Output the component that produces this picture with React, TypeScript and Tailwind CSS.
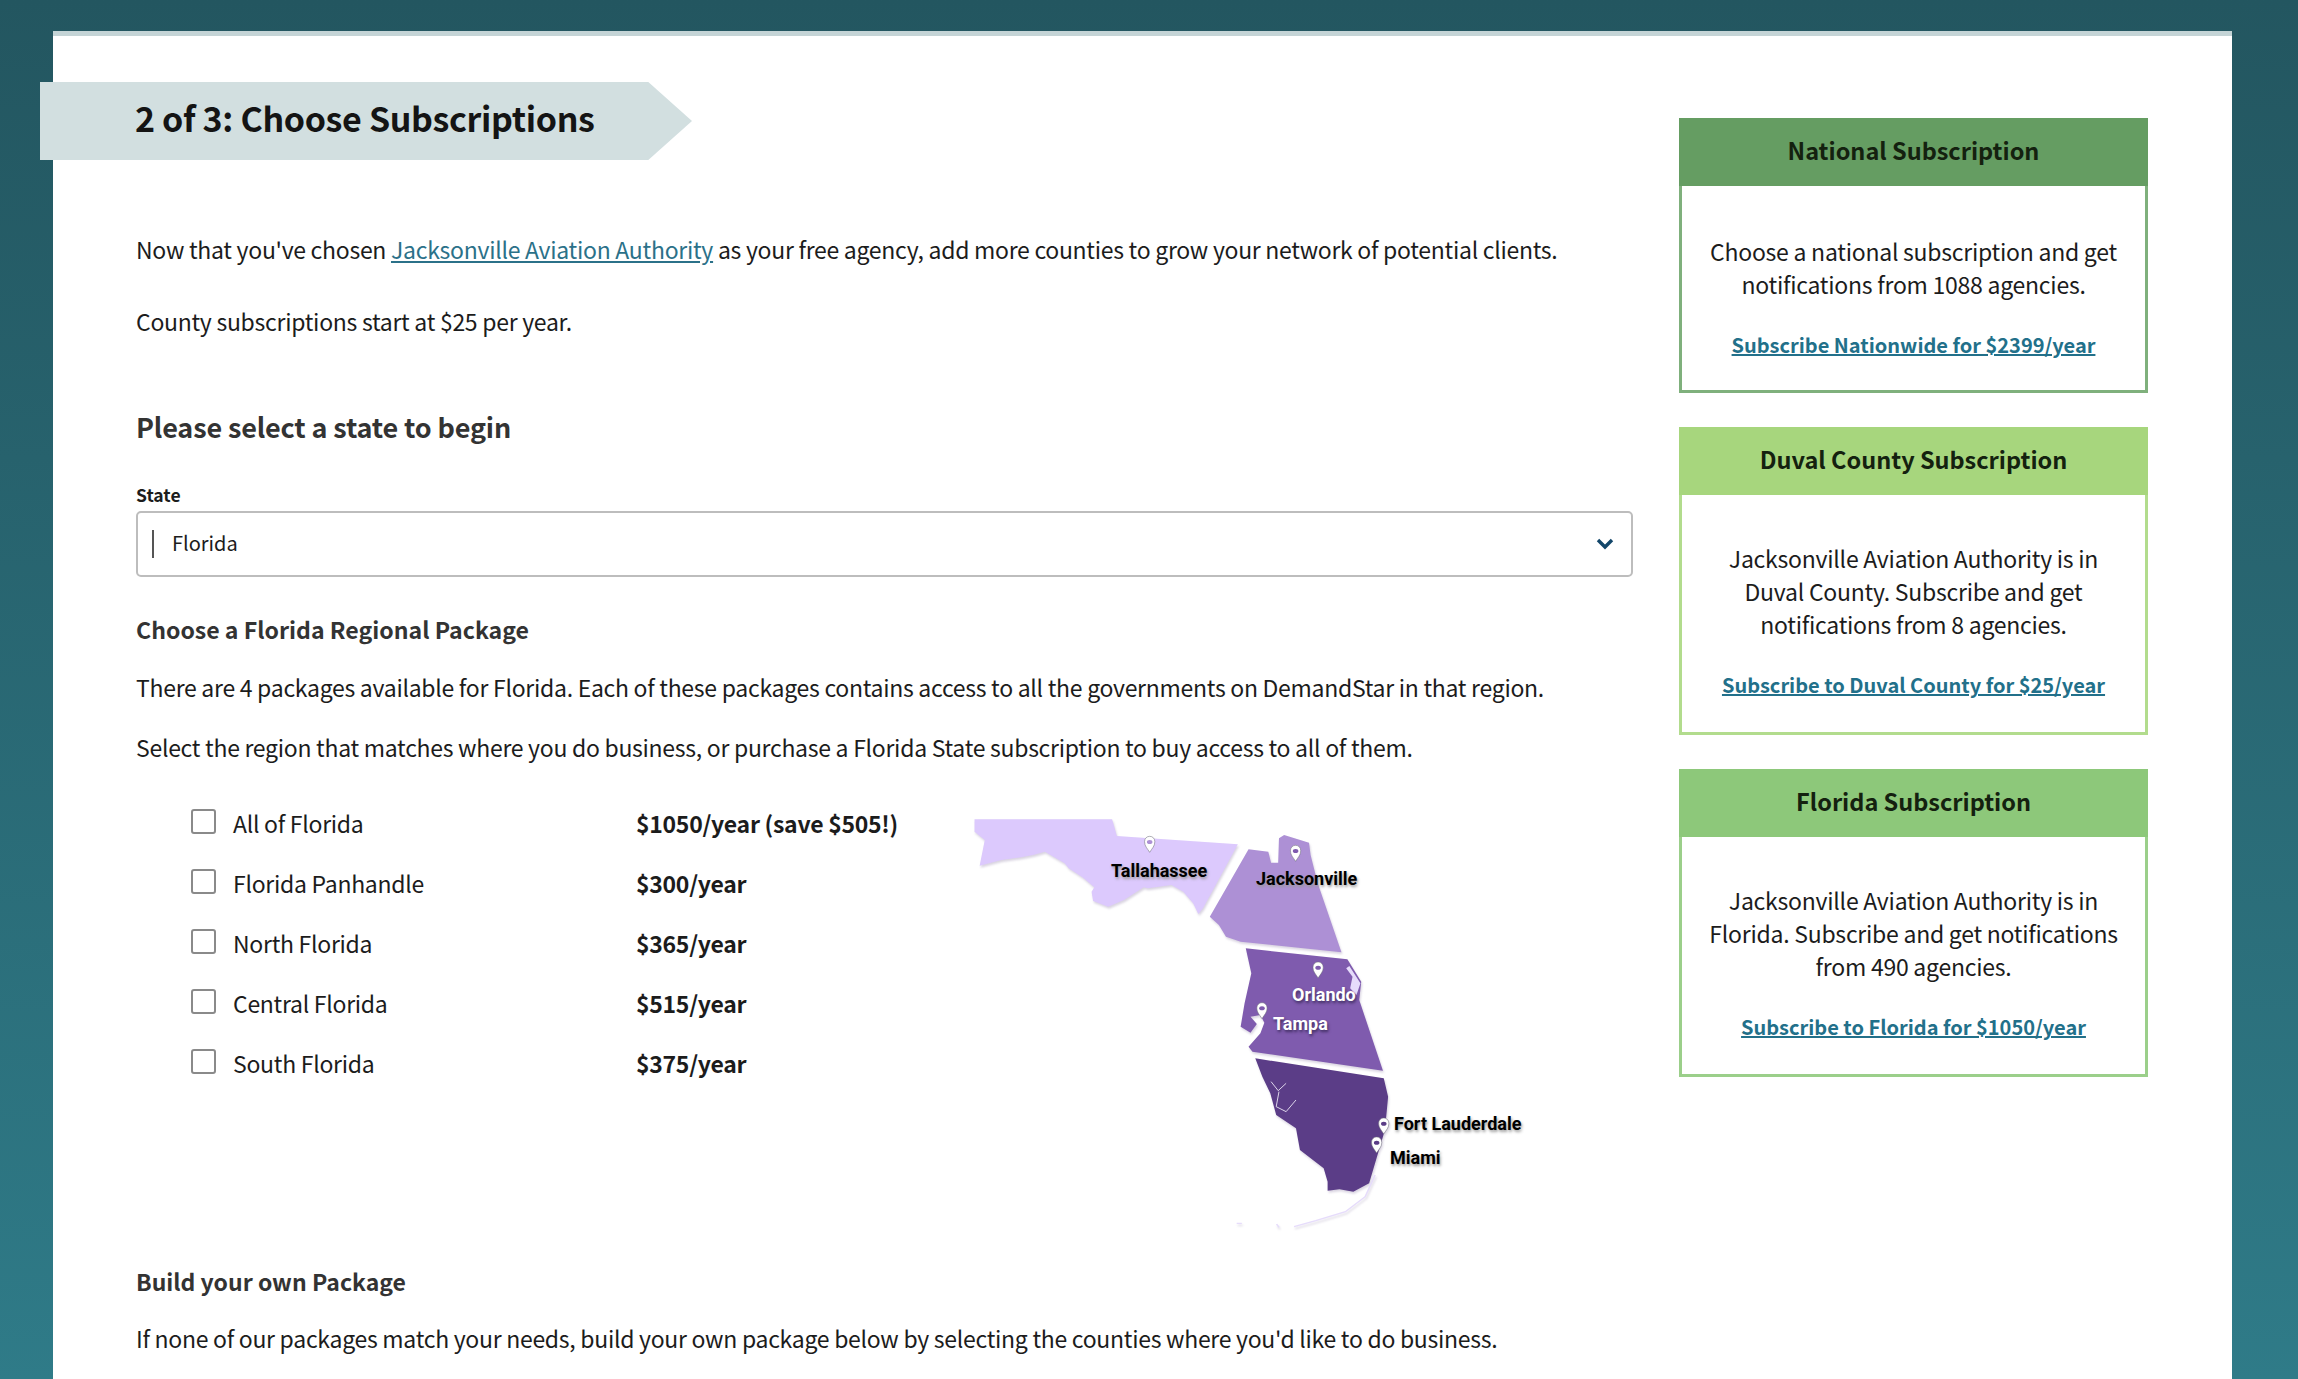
import React from "react";

const F = "font-['Noto_Sans_CJK_SC','Source_Sans_Pro','Liberation_Sans',sans-serif]";

function Pin({ x, y, fill }: { x: number; y: number; fill: string }) {
  return (
    <g transform={`translate(${x} ${y})`}>
      <path d="M0 24 C-6 12 -13 6 -13 -8 C-13 -18 -7 -24 0 -24 C7 -24 13 -18 13 -8 C13 6 6 12 0 24 Z" fill="#fff" stroke="#6d6d7a" strokeWidth="1.5" />
      <ellipse cx="0" cy="-7" rx="7" ry="6" fill={fill} />
    </g>
  );
}

function MapLabel({ className, children }: { className: string; children: React.ReactNode }) {
  return (
    <span className={`absolute font-['Roboto',sans-serif] font-bold text-[18px] leading-[22px] whitespace-nowrap ${className}`}>
      {children}
    </span>
  );
}

function FloridaMap() {
  return (
    <div className="relative w-[620px] h-[450px] shrink-0">
      <svg viewBox="0 0 1568 1350" preserveAspectRatio="none" className="w-[620px] h-[450px] block [filter:drop-shadow(1px_2px_1px_rgba(80,60,120,0.22))]">
        <path fill="#dcc9fd" d="M62 58 L410 58 L422 108 L728 133 L640 325 L628 342 L615 310 L590 275 L560 255 L500 265 L490 262 L440 300 L400 320 L362 303 L358 275 L365 262 L335 232 L300 205 L290 190 L240 155 L210 165 L180 172 L130 180 L75 197 L88 120 L62 95 Z" />
        <path fill="#ad90d5" d="M657 350 L755 148 L805 155 L812 188 L830 188 L832 115 L845 105 L908 128 L912 165 L930 250 L990 457 L735 425 L698 410 L680 375 Z" />
        <path fill="#7f5bae" d="M748 445 L1005 478 L1040 545 L1035 600 L1095 812 L765 755 L755 740 L785 700 L795 668 L785 645 L760 650 L776 672 L760 698 L735 680 L745 610 L762 520 Z" />
        <path fill="#e6dcfb" d="M1002 505 L1018 530 L1012 565 L1028 585 L1038 550 L1010 498 Z" />
        <path fill="#5b3d87" d="M772 775 L1097 835 L1108 890 L1100 990 L1075 1090 L1060 1150 L1020 1175 L985 1168 L955 1172 L955 1145 L945 1105 L885 1050 L875 985 L825 945 L810 880 L790 830 Z" />
        <path fill="none" stroke="#e9e3f3" strokeWidth="2.5" d="M812 845 L830 872 L850 850 M832 875 L825 920 L850 935 L875 900" />
        <path fill="none" stroke="#e6dcfb" strokeWidth="4" d="M1075 1125 L1050 1190 L1000 1235 L925 1262 L870 1280 M725 1270 L738 1270 M826 1272 L832 1282" />
        <Pin x={505} y={133} fill="#ad90d5" />
        <Pin x={874} y={160} fill="#7f5bae" />
        <Pin x={931} y={510} fill="#7f5bae" />
        <Pin x={789} y={632} fill="#7f5bae" />
        <Pin x={1097} y={978} fill="#5b3d87" />
        <Pin x={1079} y={1035} fill="#5b3d87" />
      </svg>
      <MapLabel className="left-[161px] top-[60px] text-black [text-shadow:1px_2px_3px_#999]">Tallahassee</MapLabel>
      <MapLabel className="left-[306px] top-[68px] text-black [text-shadow:1px_2px_3px_#999]">Jacksonville</MapLabel>
      <MapLabel className="left-[342px] top-[184px] text-white [text-shadow:1px_2px_3px_#3b2a5c]">Orlando</MapLabel>
      <MapLabel className="left-[323px] top-[213px] text-white [text-shadow:1px_2px_3px_#3b2a5c]">Tampa</MapLabel>
      <MapLabel className="left-[444px] top-[313px] text-black [text-shadow:1px_2px_3px_#999]">Fort Lauderdale</MapLabel>
      <MapLabel className="left-[440px] top-[347px] text-black [text-shadow:1px_2px_3px_#999]">Miami</MapLabel>
    </div>
  );
}

const pkgs = [
  ["All of Florida", "$1050/year (save $505!)"],
  ["Florida Panhandle", "$300/year"],
  ["North Florida", "$365/year"],
  ["Central Florida", "$515/year"],
  ["South Florida", "$375/year"],
];

function Card({ title, head, border, lines, link, topPad, pb }: { title: string; head: string; border: string; lines: string; link: string; topPad: string; pb: string }) {
  return (
    <div className={`border-[3px] ${border}`}>
      <div className={`${head} -mx-[3px] -mt-[3px] h-[68px] pb-[3px] flex items-center justify-center text-[23.5px] font-semibold text-[#14210f]`}>{title}</div>
      <div className={`${topPad} ${pb} px-[20px] text-center text-[23px] tracking-[-0.25px] leading-[33px] text-[#1c1c1c]`}>
        <p>{lines}</p>
        <p className="mt-[27px] text-[20px] tracking-normal">
          <a className="font-semibold text-[#22708a] underline">{link}</a>
        </p>
      </div>
    </div>
  );
}

const body = "text-[23px] tracking-[-0.28px] leading-[36px]";

export default function App() {
  return (
    <div className={`${F} h-[1379px] overflow-hidden bg-gradient-to-b from-[#235660] to-[#2f7b88] pt-[31px] pl-[53px] pr-[66px]`}>
      <div className="h-[1348px] bg-white border-t-[5px] border-[#c4d4d6] flex text-[#1c1c1c]">
        <div className="w-[1580px] pl-[83px] shrink-0">
          <div className="-ml-[96px] mt-[46px] w-[652px] h-[78px] bg-[#d2dfe0] pl-[95px] pb-[7px] flex items-center text-[34px] tracking-[-0.33px] font-semibold text-[#141414] [clip-path:polygon(0_0,93.3%_0,100%_50%,93.3%_100%,0_100%)]">
            2 of 3: Choose Subscriptions
          </div>
          <p className={`mt-[71px] ${body}`}>
            Now that you've chosen <a className="text-[#2b7189] underline">Jacksonville Aviation Authority</a> as your free agency, add more counties to grow your network of potential clients.
          </p>
          <p className={`mt-[36px] ${body}`}>County subscriptions start at $25 per year.</p>
          <h2 className="mt-[68px] text-[27px] tracking-[-0.15px] leading-[40px] font-semibold text-[#333]">Please select a state to begin</h2>
          <div className="mt-[38px] text-[17.5px] leading-[20px] font-semibold">State</div>
          <div className="mt-[6px] w-[1497px] h-[66px] rounded-[5px] border-2 border-[#bdbdbd] flex items-center pl-[14px] pr-[17px] text-[20px]">
            <span className="w-[2px] h-[28px] bg-[#555]" />
            <span className="ml-[18px] flex-1 pb-[2px]">Florida</span>
            <svg width="18" height="12" viewBox="0 0 18 12"><path d="M2 2 L9 9 L16 2" fill="none" stroke="#12466a" strokeWidth="3.4" /></svg>
          </div>
          <h3 className="mt-[36px] text-[23.1px] leading-[32px] font-semibold text-[#333]">Choose a Florida Regional Package</h3>
          <p className={`mt-[24px] ${body}`}>There are 4 packages available for Florida. Each of these packages contains access to all the governments on DemandStar in that region.</p>
          <p className={`mt-[24px] ${body}`}>Select the region that matches where you do business, or purchase a Florida State subscription to buy access to all of them.</p>
          <div className="mt-[35px] flex h-[450px]">
            <div className="w-[814px] pl-[55px] -mt-[7px] flex flex-col">
              {pkgs.map(([name, price]) => (
                <div key={name} className={`h-[60px] flex items-center ${body}`}>
                  <span className="w-[25px] h-[25px] border-2 border-[#8a8a8a] rounded-[3px] shrink-0 -mt-[3px]" />
                  <span className="ml-[17px] w-[403px]">{name}</span>
                  <span className="font-semibold">{price}</span>
                </div>
              ))}
            </div>
            <FloridaMap />
          </div>
          <h3 className="mt-[16px] text-[23px] leading-[30px] font-semibold text-[#333]">Build your own Package</h3>
          <p className={`mt-[24px] ${body}`}>If none of our packages match your needs, build your own package below by selecting the counties where you'd like to do business.</p>
        </div>
        <div className="w-[469px] ml-[46px] shrink-0 pt-[82px] flex flex-col gap-[34px]">
          <Card title="National Subscription" head="bg-[#659d62]" border="border-[#7fb07c]" lines="Choose a national subscription and get notifications from 1088 agencies." link="Subscribe Nationwide for $2399/year" topPad="pt-[49px]" pb="pb-[29px]" />
          <Card title="Duval County Subscription" head="bg-[#a7d67d]" border="border-[#b2dc8d]" lines="Jacksonville Aviation Authority is in Duval County. Subscribe and get notifications from 8 agencies." link="Subscribe to Duval County for $25/year" topPad="pt-[47px]" pb="pb-[31px]" />
          <Card title="Florida Subscription" head="bg-[#8dc87a]" border="border-[#9bcf8a]" lines="Jacksonville Aviation Authority is in Florida. Subscribe and get notifications from 490 agencies." link="Subscribe to Florida for $1050/year" topPad="pt-[47px]" pb="pb-[31px]" />
        </div>
      </div>
    </div>
  );
}
